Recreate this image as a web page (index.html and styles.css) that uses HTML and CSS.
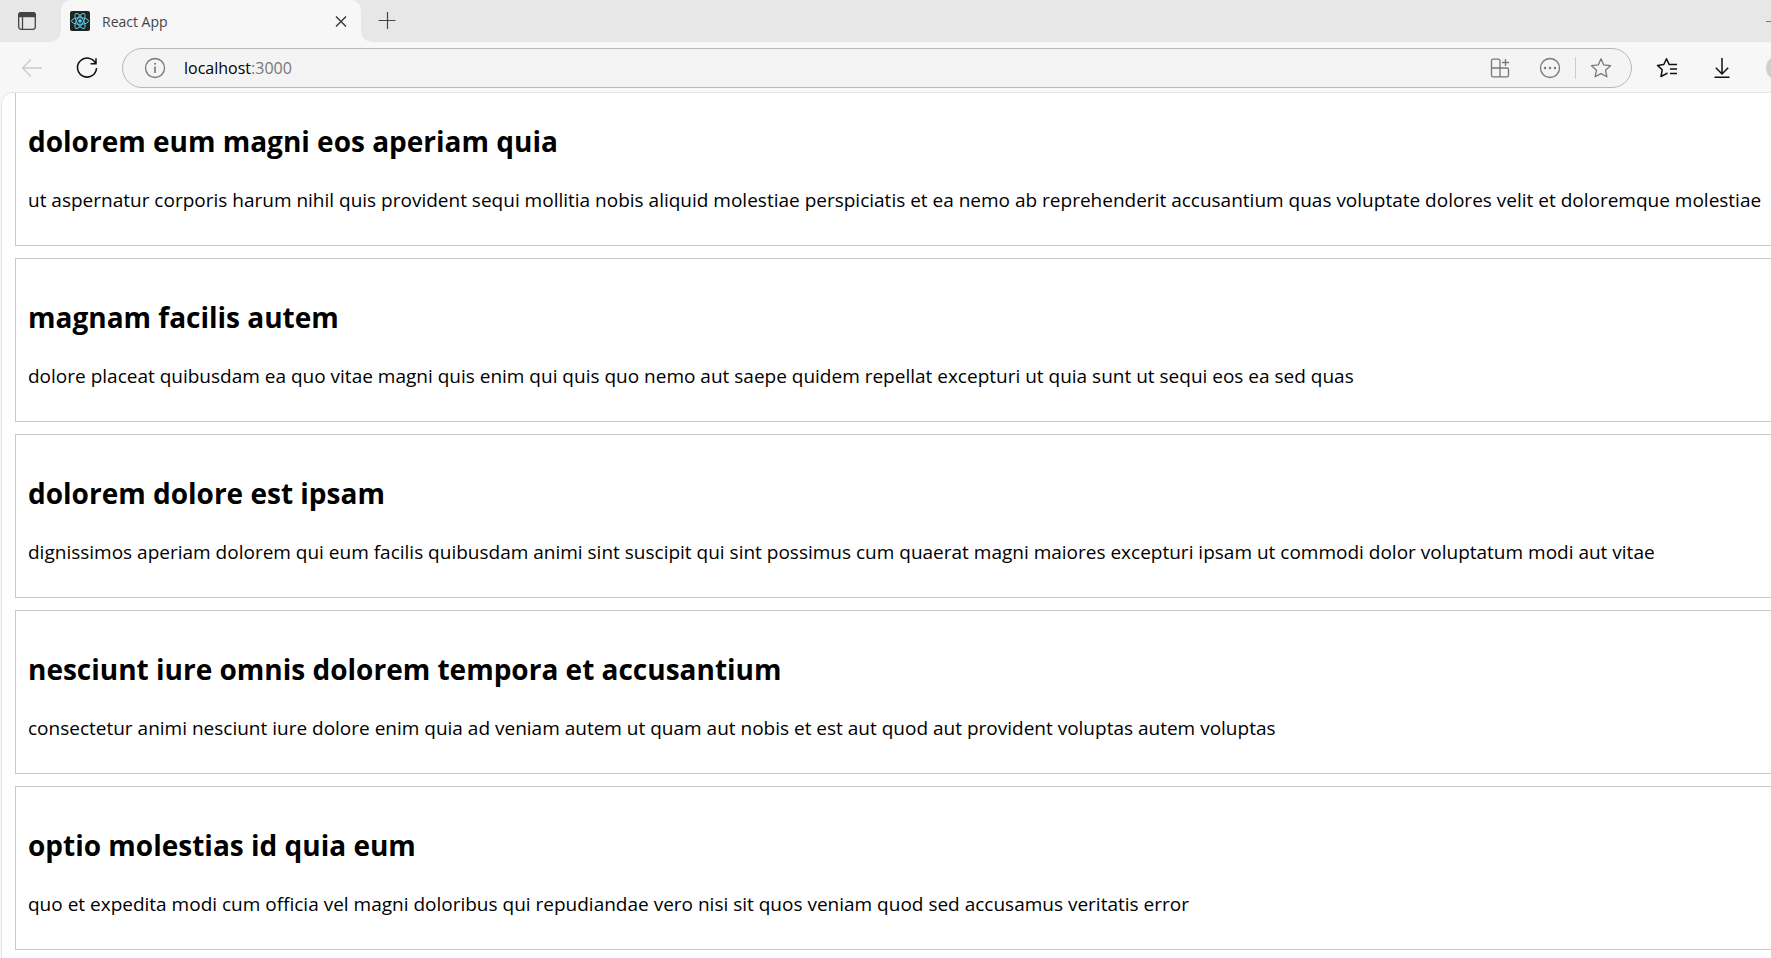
FILE: index.html
```html
<!DOCTYPE html>
<html lang="en">
<head>
<meta charset="utf-8">
<title>React App</title>
<link rel="stylesheet" href="styles.css">
</head>
<body>
<div class="browser">
  <header class="tab-strip">
    <button class="icon-button tab-actions" aria-label="Tab actions">
      <svg width="20" height="20" viewBox="0 0 20 20" fill="none" stroke="#444" stroke-width="1.3"><rect x="1.7" y="1.7" width="16.6" height="16.6" rx="2.5"/><path d="M1.7 5.5V4a2.4 2.4 0 0 1 2.4-2.4h11.8A2.4 2.4 0 0 1 18.3 4v1.500z" fill="#444"/><path d="M5.500 5v13"/></svg>
    </button>
    <div class="tab">
      <svg class="favicon" width="20" height="20" viewBox="0 0 20 20" fill="none" stroke="#5ac8e2" stroke-width="1"><rect width="20" height="20" rx="2" fill="#222" stroke="none"/><ellipse cx="10" cy="10" rx="8.500" ry="3.300"/><ellipse cx="10" cy="10" rx="8.500" ry="3.300" transform="rotate(60 10 10)"/><ellipse cx="10" cy="10" rx="8.500" ry="3.300" transform="rotate(120 10 10)"/><circle cx="10" cy="10" r="1.700" fill="#61dafb" stroke="none"/></svg>
      <span class="tab-title">React App</span>
      <button class="icon-button" aria-label="Close tab">
        <svg width="20" height="20" viewBox="0 0 20 20" fill="none" stroke="#333" stroke-width="1.300"><path d="M5 5.500l10 10M15 5.500l-10 10"/></svg>
      </button>
    </div>
    <button class="icon-button new-tab" aria-label="New tab">
      <svg width="20" height="20" viewBox="0 0 20 20" fill="none" stroke="#444" stroke-width="1.200"><path d="M1.500 9.500h17M10.500 1v17"/></svg>
    </button>
    <button class="minimize" aria-label="Minimize"></button>
  </header>
  <nav class="toolbar" aria-label="Browser toolbar">
    <button class="icon-button back" aria-label="Back" disabled>
      <svg width="24" height="24" viewBox="0 0 24 24" fill="none" stroke="#ccc" stroke-width="1.300"><path d="M22 12H2.500M11 3.500L2.500 12l8.500 8.500"/></svg>
    </button>
    <button class="icon-button" aria-label="Refresh">
      <svg width="24" height="24" viewBox="0 0 24 24" fill="none" stroke="#111" stroke-width="1.500"><path d="M20.600 7.500A9.500 9.500 0 1 0 21.500 12M21 2.300v5.400h-5.400"/></svg>
    </button>
    <div class="address-bar">
      <button class="icon-button" aria-label="Site information">
        <svg width="22" height="22" viewBox="0 0 22 22" fill="none" stroke="#777" stroke-width="1.300"><circle cx="11" cy="11" r="9.500"/><path d="M11 9.500V16" stroke-width="1.600"/><circle cx="11" cy="6.700" r="1" fill="#777" stroke="none"/></svg>
      </button>
      <a class="url" href="#">localhost<span class="port">:3000</span></a>
      <button class="icon-button apps" aria-label="App available">
        <svg width="20" height="20" viewBox="0 0 20 20" fill="none" stroke="#777" stroke-width="1.300"><path d="M10 10V2.600A1.400 1.400 0 0 0 8.600 1.200H2.900A1.400 1.400 0 0 0 1.500 2.600v14.800a1.400 1.400 0 0 0 1.400 1.400h14.200a1.400 1.400 0 0 0 1.400-1.400v-6a1.400 1.400 0 0 0-1.400-1.400zM1.500 10H10v8.800M15.500 1v7M12 4.500h7"/></svg>
      </button>
      <button class="icon-button more" aria-label="More actions">
        <svg width="22" height="22" viewBox="0 0 22 22" fill="none" stroke="#777" stroke-width="1.300"><circle cx="11" cy="11" r="9.500"/><g fill="#777" stroke="none"><circle cx="6" cy="11" r="1.200"/><circle cx="11" cy="11" r="1.200"/><circle cx="16" cy="11" r="1.200"/></g></svg>
      </button>
      <span class="divider"></span>
      <button class="icon-button" aria-label="Add to favorites">
        <svg width="22" height="22" viewBox="0 0 22 22" fill="none" stroke="#777" stroke-width="1.300" stroke-linejoin="round"><path d="M11 1.800l2.700 6.100 6.800.8-5 4.500 1.400 6.600L11 16.600l-5.900 3.200 1.400-6.600-5-4.500 6.800-.8z"/></svg>
      </button>
    </div>
    <button class="icon-button favorites" aria-label="Favorites">
      <svg width="22" height="22" viewBox="0 0 22 22" fill="none" stroke="#111" stroke-width="1.500" stroke-linejoin="round"><path d="M15.500 7.600l-2.400-.2-2.600-5.600L7.800 7.500l-6.300.9 4.700 4.400L5 19.500l5-2.700 1.600-.6M14 7.500h7M14 12h7M14 16.500h7"/></svg>
    </button>
    <button class="icon-button" aria-label="Downloads">
      <svg width="22" height="22" viewBox="0 0 22 22" fill="none" stroke="#111" stroke-width="1.500"><path d="M11 1v16M4.800 10.800L11 17l6.200-6.200M3.500 20.300h15"/></svg>
    </button>
    <button class="profile" aria-label="Profile"></button>
  </nav>
  <main class="page">
    <div class="posts">
      <article class="post"><h2>dolorem eum magni eos aperiam quia</h2><p>ut aspernatur corporis harum nihil quis provident sequi mollitia nobis aliquid molestiae perspiciatis et ea nemo ab reprehenderit accusantium quas voluptate dolores velit et doloremque molestiae</p></article>
      <article class="post"><h2>magnam facilis autem</h2><p>dolore placeat quibusdam ea quo vitae magni quis enim qui quis quo nemo aut saepe quidem repellat excepturi ut quia sunt ut sequi eos ea sed quas</p></article>
      <article class="post"><h2>dolorem dolore est ipsam</h2><p>dignissimos aperiam dolorem qui eum facilis quibusdam animi sint suscipit qui sint possimus cum quaerat magni maiores excepturi ipsam ut commodi dolor voluptatum modi aut vitae</p></article>
      <article class="post"><h2>nesciunt iure omnis dolorem tempora et accusantium</h2><p>consectetur animi nesciunt iure dolore enim quia ad veniam autem ut quam aut nobis et est aut quod aut provident voluptas autem voluptas</p></article>
      <article class="post"><h2>optio molestias id quia eum</h2><p>quo et expedita modi cum officia vel magni doloribus qui repudiandae vero nisi sit quos veniam quod sed accusamus veritatis error</p></article>
    </div>
  </main>
</div>
</body>
</html>
```
FILE: styles.css
```css
* { box-sizing: border-box; }
body {
  margin: 0;
  font-family: "Segoe UI", "Open Sans", "Noto Sans", sans-serif;
  color: #000;
}
.browser {
  display: flex;
  flex-direction: column;
  height: 100vh;
  overflow: hidden;
  background: #f7f7f7;
}
button {
  flex: none;
  margin: 0;
  padding: 0;
  border: 0;
  background: none;
}
.icon-button { display: flex; }
.tab-strip {
  flex: none;
  display: flex;
  align-items: center;
  height: 42px;
  padding-left: 17px;
  background: #e7e7e7;
}
.tab {
  position: relative;
  display: flex;
  align-items: center;
  width: 300px;
  height: 42px;
  margin-left: 24px;
  padding: 0 10px 0 9px;
  border-radius: 10px 10px 0 0;
  background: #f7f7f7;
}
.tab::before,
.tab::after {
  content: "";
  position: absolute;
  bottom: 0;
  width: 10px;
  height: 10px;
}
.tab::before {
  right: 100%;
  background: radial-gradient(circle at 0 0, #e7e7e7 9px, #f7f7f7 10px);
}
.tab::after {
  left: 100%;
  background: radial-gradient(circle at 100% 0, #e7e7e7 9px, #f7f7f7 10px);
}
.tab-title {
  flex: 1;
  margin-left: 12px;
  font-size: 14px;
  color: #444;
}
.new-tab { margin-left: 16px; }
.minimize {
  width: 5px;
  height: 1px;
  margin-left: auto;
  background: #777;
}
.toolbar {
  flex: none;
  display: flex;
  align-items: center;
  height: 50px;
  padding: 2px 0 0 20px;
}
.back { margin-right: 31px; }
.address-bar {
  flex: 1;
  display: flex;
  align-items: center;
  height: 40px;
  margin-left: 23px;
  padding: 0 19px 0 21px;
  border: 1px solid #b8b8b8;
  border-radius: 20px;
  background: #f4f4f4;
}
.url {
  flex: 1;
  margin-left: 18px;
  font-size: 16px;
  color: #000;
  text-decoration: none;
}
.port { color: #777; }
.more { margin-left: 29px; }
.divider {
  width: 1px;
  height: 22px;
  margin: 0 14px;
  background: #ccc;
}
.favorites { margin: 0 33px 0 24px; }
.profile {
  width: 24px;
  height: 24px;
  margin: 0 -19px 0 33px;
  border-radius: 50%;
  background: #d3d0cb;
}
.page {
  flex: 1;
  min-height: 0;
  overflow: hidden;
  margin-left: 1px;
  border-left: 1px solid #e6e6e6;
  border-top: 1px solid #e6e6e6;
  border-top-left-radius: 12px;
  background: #fff;
}
.posts {
  display: flex;
  flex-direction: column;
  gap: 12px;
  margin: -11px -12px 0 13px;
}
.post {
  padding: 12px;
  border: 1px solid #c8c8c8;
  white-space: nowrap;
}
.post h2 {
  margin: 26px 0 25px;
  font-size: 28px;
  line-height: 40px;
}
.post p {
  margin: 0 0 19px;
  font-size: 19px;
  line-height: 28px;
}
```
